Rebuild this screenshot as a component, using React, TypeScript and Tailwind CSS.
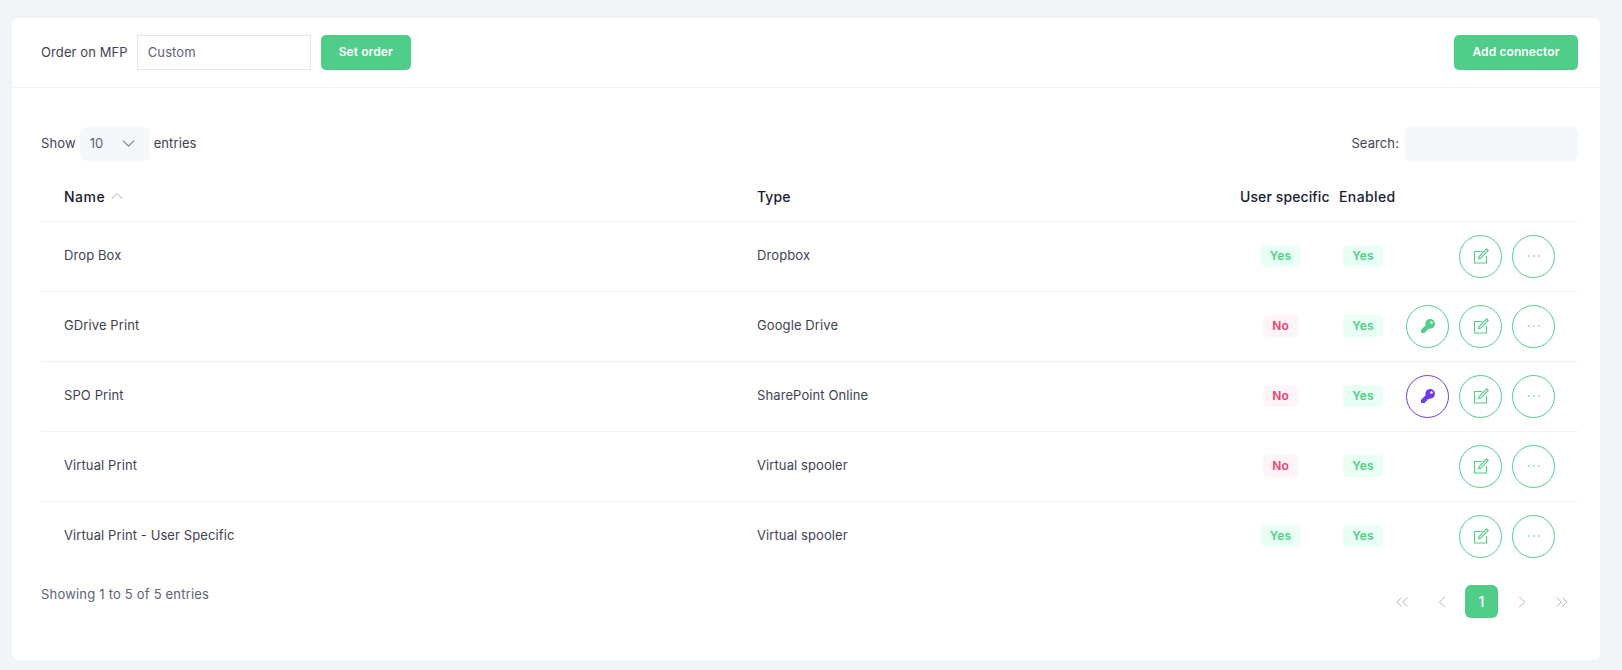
import { ChevronDown, ChevronLeft, ChevronRight, ChevronUp, ChevronsLeft, ChevronsRight } from 'lucide-react';
import { FaKey } from 'react-icons/fa';

type Row = {
  name: string;
  type: string;
  userSpecific: boolean;
  keyColor?: 'green' | 'purple';
};

const rows: Row[] = [
  { name: 'Drop Box', type: 'Dropbox', userSpecific: true },
  { name: 'GDrive Print', type: 'Google Drive', userSpecific: false, keyColor: 'green' },
  { name: 'SPO Print', type: 'SharePoint Online', userSpecific: false, keyColor: 'purple' },
  { name: 'Virtual Print', type: 'Virtual spooler', userSpecific: false },
  { name: 'Virtual Print - User Specific', type: 'Virtual spooler', userSpecific: true },
];

function Badge({ yes }: { yes: boolean }) {
  return (
    <span
      className={`inline-flex h-[22px] items-center rounded-[5px] px-[9px] text-[12px] font-semibold ${
        yes ? 'bg-[#e8fff3] text-[#50cd89]' : 'bg-[#fff5f8] text-[#f1416c]'
      }`}
    >
      {yes ? 'Yes' : 'No'}
    </span>
  );
}

function CircleButton({ purple, children }: { purple?: boolean; children: React.ReactNode }) {
  return (
    <button
      className={`flex h-[43px] w-[43px] items-center justify-center rounded-full border bg-white ${
        purple ? 'border-[#7239ea] text-[#7239ea]' : 'border-[#50cd89] text-[#50cd89]'
      }`}
    >
      {children}
    </button>
  );
}

function EditIcon() {
  return (
    <svg width="16" height="16" viewBox="0 0 16 16" fill="none" stroke="currentColor" strokeWidth="1.1">
      <path d="M9 3.5H1.5V15H13.5V8" />
      <path d="M13.6.9l1.6 1.6-7.4 7.6-2.2.6.6-2.2z" />
    </svg>
  );
}

function DotsIcon() {
  return (
    <svg width="14" height="4" viewBox="0 0 14 4" fill="currentColor">
      <circle cx="2" cy="2" r="0.8" />
      <circle cx="7" cy="2" r="0.8" />
      <circle cx="12" cy="2" r="0.8" />
    </svg>
  );
}

function PageArrow({ children }: { children: React.ReactNode }) {
  return <span className="flex h-[33px] w-[33px] items-center justify-center text-[#b5b5c3]">{children}</span>;
}

export default function App() {
  return (
    <div className="h-[670px] overflow-hidden bg-[#f3f6f9] pt-[18px] pr-[22px] pl-3 font-['Inter',sans-serif] text-[13px] tracking-[0.1px] text-[#3f4254]">
      <div className="h-[642px] rounded-[6px] bg-white shadow-[0_0_20px_rgba(76,87,125,0.04)]">
        {/* Card header */}
        <div className="flex h-[70px] items-center justify-between border-b border-[#eff2f5] pr-[22px] pl-[29px]">
          <div className="flex items-center">
            <span className="mt-[1px] mr-[9px]">Order on MFP</span>
            <input
              readOnly
              value="Custom"
              className="h-[35px] w-[174px] border border-[#e4e6ef] bg-white px-[10px] pb-[2px] text-[13px] text-[#5e6278] outline-none"
            />
            <button className="ml-[10px] h-[35px] w-[90px] rounded-[5px] bg-[#50cd89] pb-[1px] text-[12px] font-semibold text-white">
              Set order
            </button>
          </div>
          <button className="h-[35px] w-[124px] rounded-[5px] bg-[#50cd89] pb-[1px] text-[12px] font-semibold text-white">
            Add connector
          </button>
        </div>

        <div className="pr-[22px] pl-[29px]">
          {/* Length and search */}
          <div className="mt-[38px] flex h-[35px] items-center justify-between">
            <div className="flex items-center">
              <span>Show</span>
              <div className="mx-[4px] flex h-[34px] w-[70px] items-center justify-between rounded-[6px] bg-[#f5f8fa] pr-[11px] pl-[10px] text-[13px] text-[#5e6278]">
                10
                <ChevronDown size={21} strokeWidth={1.4} className="text-[#7e8299]" />
              </div>
              <span>entries</span>
            </div>
            <div className="flex items-center">
              <span className="mr-[6px]">Search:</span>
              <div className="h-[34px] w-[173px] rounded-[6px] bg-[#f5f8fa]" />
            </div>
          </div>

          {/* Table */}
          <table className="mt-[8px] w-full table-fixed border-collapse">
            <colgroup>
              <col className="w-[693px]" />
              <col className="w-[500px]" />
              <col className="w-[100px]" />
              <col className="w-[65px]" />
              <col />
            </colgroup>
            <thead>
              <tr className="h-[52px] border-b border-[#eff2f5] text-left text-[14px] font-medium text-[#181c32]">
                <th className="pt-[3px] pl-[23px] font-medium">
                  <span className="flex items-center gap-[2px] tracking-[0.5px]">
                    Name
                    <ChevronUp size={20} strokeWidth={1.1} className="text-[#a1a5b7]" />
                  </span>
                </th>
                <th className="pt-[3px] pl-[23px] font-medium">Type</th>
                <th className="pt-[3px] pl-[6px] font-medium whitespace-nowrap">User specific</th>
                <th className="pt-[3px] pl-[5px] font-medium tracking-[0.4px]">Enabled</th>
                <th />
              </tr>
            </thead>
            <tbody>
              {rows.map((row, i) => (
                <tr key={row.name} className={`h-[70px] ${i < rows.length - 1 ? 'border-b border-[#eff2f5]' : ''}`}>
                  <td className="pb-[1px] pl-[23px]">{row.name}</td>
                  <td className="pb-[1px] pl-[23px]">{row.type}</td>
                  <td className="pr-[7px] text-center">
                    <Badge yes={row.userSpecific} />
                  </td>
                  <td className="pr-[7px] text-center">
                    <Badge yes />
                  </td>
                  <td className="pr-[23px]">
                    <div className="flex justify-end gap-[10px]">
                      {row.keyColor && (
                        <CircleButton purple={row.keyColor === 'purple'}>
                          <FaKey size={14} />
                        </CircleButton>
                      )}
                      <CircleButton>
                        <EditIcon />
                      </CircleButton>
                      <CircleButton>
                        <DotsIcon />
                      </CircleButton>
                    </div>
                  </td>
                </tr>
              ))}
            </tbody>
          </table>

          {/* Footer */}
          <div className="flex items-start justify-between">
            <span className="mt-[14px] tracking-[0.2px] text-[#5e6278]">Showing 1 to 5 of 5 entries</span>
            <div className="mt-[14px] flex items-center gap-[7px]">
              <PageArrow>
                <ChevronsLeft size={20} strokeWidth={1.2} />
              </PageArrow>
              <PageArrow>
                <ChevronLeft size={20} strokeWidth={1.2} />
              </PageArrow>
              <span className="flex h-[33px] w-[33px] items-center justify-center rounded-[6px] bg-[#50cd89] text-[14px] font-medium text-white">
                1
              </span>
              <PageArrow>
                <ChevronRight size={20} strokeWidth={1.2} />
              </PageArrow>
              <PageArrow>
                <ChevronsRight size={20} strokeWidth={1.2} />
              </PageArrow>
            </div>
          </div>
        </div>
      </div>
    </div>
  );
}
